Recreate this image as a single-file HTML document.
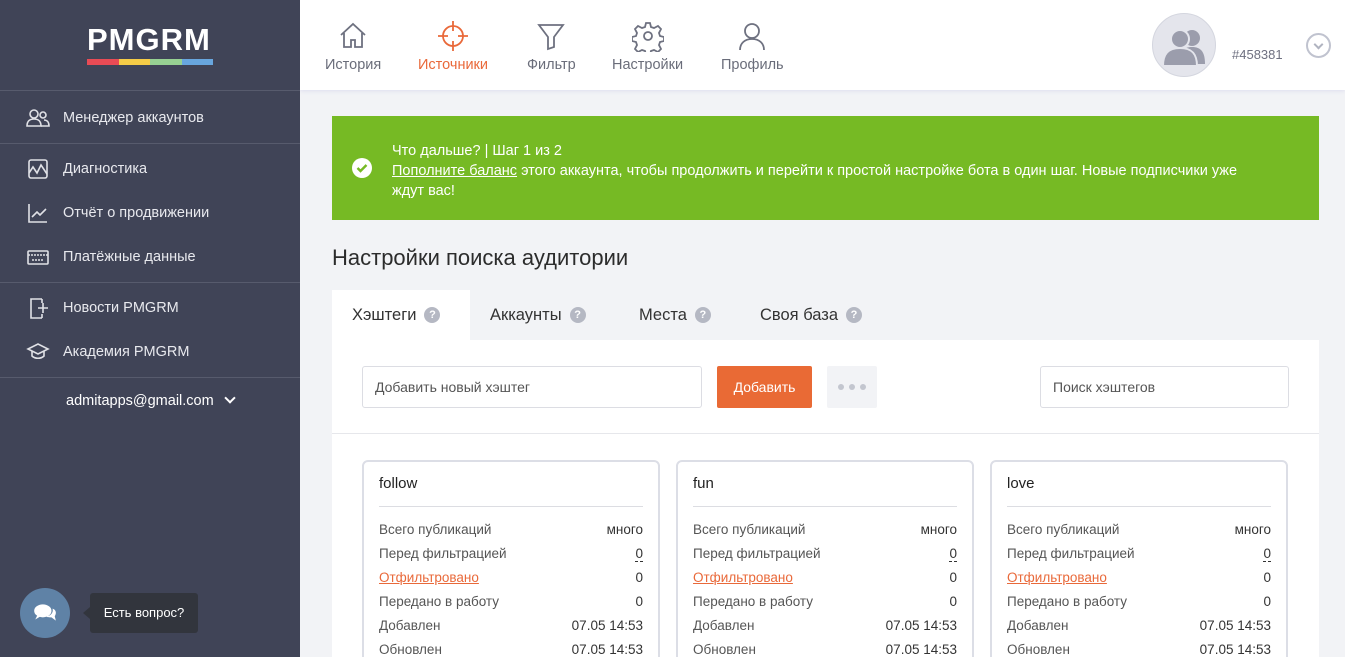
<!DOCTYPE html>
<html><head><meta charset="utf-8"><style>
*{box-sizing:border-box;margin:0;padding:0}
html,body{width:1345px;height:657px;overflow:hidden}
body{background:#f2f3f6;font-family:"Liberation Sans",sans-serif;position:relative}
.sb{position:absolute;left:0;top:0;width:300px;height:657px;background:#404457;color:#e8e9ee;z-index:2}
.logo{position:absolute;left:87px;top:22px;font-weight:bold;font-size:31px;color:#fff;letter-spacing:1px}
.bar{position:absolute;left:87px;top:59px;width:126px;height:6px;display:flex}
.bar i{flex:1}
.hr{position:absolute;left:0;width:300px;height:1px;background:#575b6d}
.it{position:absolute;left:26px;font-size:14.5px;display:flex;align-items:center;gap:13px}
.it svg{width:24px;height:24px;fill:none;stroke:#e0e1e6;stroke-width:1.6}
.hd{position:absolute;left:300px;top:0;right:0;height:90px;background:#fff;box-shadow:0 1px 4px #dde}
.nav{position:absolute;top:20px;text-align:center;font-size:14.5px;color:#6a6d7a}
.nav svg{display:block;margin:0 auto 5px;width:32px;height:32px;fill:none;stroke:#6e7180;stroke-width:1.8}
.tab{position:absolute;top:290px;height:50px;font-size:16.5px;color:#333;display:flex;align-items:center;gap:8px}
.q{width:16px;height:16px;border-radius:50%;background:#b5b8c3;color:#fff;font-size:11px;font-weight:bold;display:flex;align-items:center;justify-content:center}
.card{position:absolute;top:460px;width:298px;height:220px;border:2px solid #dcdee6;border-radius:6px;background:#fff;padding:0 15px}
.card h4{font-weight:normal;font-size:15px;color:#222;height:45px;line-height:44px;border-bottom:1px solid #dcdde2;margin-bottom:14px}
.r{display:flex;justify-content:space-between;font-size:13.5px;color:#555;height:24px;line-height:17px}
.r b{font-weight:normal;color:#333}
</style></head><body>
<div class="sb">
<div class="logo">PMGRM</div>
<div class="bar"><i style="background:#e94b55"></i><i style="background:#f5cc47"></i><i style="background:#97d192"></i><i style="background:#68a6de"></i></div>
<div class="hr" style="top:90px"></div>
<div class="it" style="top:106px"><svg viewBox="0 0 24 24"><circle cx="8" cy="8" r="4"/><path d="M1 20c0-5 3-7 7-7s7 2 7 7z"/><circle cx="17" cy="9" r="3"/><path d="M15 20h8c0-4-2-6-5-6"/></svg>Менеджер аккаунтов</div>
<div class="hr" style="top:143px"></div>
<div class="it" style="top:157px"><svg viewBox="0 0 24 24"><rect x="3" y="3" width="18" height="18" rx="2"/><path d="M3 16l4-6 4 6 4-8 6 9"/></svg>Диагностика</div>
<div class="it" style="top:201px"><svg viewBox="0 0 24 24"><path d="M3 3v18h18M6 16l5-5 3 3 6-6"/></svg>Отчёт о продвижении</div>
<div class="it" style="top:245px"><svg viewBox="0 0 24 24"><rect x="2" y="6" width="20" height="13" rx="1"/><path d="M2 10h20M6 15h12" stroke-dasharray="2 1"/></svg>Платёжные данные</div>
<div class="hr" style="top:282px"></div>
<div class="it" style="top:296px"><svg viewBox="0 0 24 24"><path d="M16 3H5v19h11M16 3v4M16 22v-4M12 12h10M17 7v10"/></svg>Новости PMGRM</div>
<div class="it" style="top:340px"><svg viewBox="0 0 24 24"><path d="M2 9l10-5 10 5-10 5z M6 11v5c3 3 9 3 12 0v-5"/></svg>Академия PMGRM</div>
<div class="hr" style="top:377px"></div>
<div style="position:absolute;left:66px;top:393px;font-size:14.5px;color:#fff">admitapps@gmail.com <span style="display:inline-block;width:8px;height:8px;border-right:2px solid #fff;border-bottom:2px solid #fff;transform:rotate(45deg);margin:0 0 3px 8px"></span></div>
<div style="position:absolute;left:20px;top:588px;width:50px;height:50px;border-radius:50%;background:#5f82a6"><svg viewBox="0 0 24 24" width="26" height="26" style="margin:12px" fill="#fff"><ellipse cx="10" cy="10" rx="8" ry="6"/><path d="M5 14l-2 4 5-3z"/><path d="M19 8c3 1 4 4 2 7l1 4-4-3c-2 0-4 0-5-1 4 0 7-3 6-7z"/></svg></div>
<div style="position:absolute;left:90px;top:593px;width:108px;height:40px;background:#32353d;border-radius:3px;color:#fff;font-size:13px;line-height:40px;text-align:center">Есть вопрос?</div>
<div style="position:absolute;left:83px;top:607px;border:6px solid transparent;border-right:7px solid #32353d;border-left:0"></div>
</div>
<div class="hd">
<div class="nav" style="left:25px"><svg viewBox="0 0 32 32"><path d="M4 15L16 4l12 11M7 13v14h7v-7h4v7h7V13"/></svg>История</div>
<div class="nav" style="left:118px;color:#e9693a"><svg viewBox="0 0 32 32" style="stroke:#e9693a"><circle cx="16" cy="16" r="10"/><path d="M16 1v10M16 21v10M1 16h10M21 16h10"/></svg>Источники</div>
<div class="nav" style="left:227px"><svg viewBox="0 0 32 32"><path d="M4 5h24l-9 12v10l-6 2V17z"/></svg>Фильтр</div>
<div class="nav" style="left:312px"><svg viewBox="0 0 32 32"><circle cx="16" cy="16" r="4"/><path d="M14 3h4l1 4 3 1 4-2 3 3-2 4 1 3 4 1v4l-4 1-1 3 2 4-3 3-4-2-3 1-1 4h-4l-1-4-3-1-4 2-3-3 2-4-1-3-4-1v-4l4-1 1-3-2-4 3-3 4 2 3-1z"/></svg>Настройки</div>
<div class="nav" style="left:421px"><svg viewBox="0 0 32 32"><circle cx="16" cy="11" r="7"/><path d="M4 30c0-7 5-11 12-11s12 4 12 11"/></svg>Профиль</div>
<div style="position:absolute;left:852px;top:13px;width:64px;height:64px;border-radius:50%;background:#e4e5ec;border:1px solid #d4d6df;overflow:hidden"><svg viewBox="0 0 64 64" width="64" height="64" fill="#9b9dac"><circle cx="39" cy="24" r="8"/><path d="M26 50c0-12 4-17 13-17s13 5 13 17z"/><circle cx="27" cy="25" r="9" stroke="#e4e5ec" stroke-width="2"/><path d="M10 52c0-12 5-18 17-18s17 6 17 18z" stroke="#e4e5ec" stroke-width="2"/></svg></div>
<div style="position:absolute;left:932px;top:47px;font-size:13px;color:#6e7080">#458381</div>
<div style="position:absolute;left:1006px;top:33px;width:25px;height:25px;border-radius:50%;border:2px solid #c0c3cf"><div style="width:7px;height:7px;border-right:2px solid #b0b3c0;border-bottom:2px solid #b0b3c0;transform:rotate(45deg);margin:6px auto 0"></div></div>
</div>
<div style="position:absolute;left:332px;top:116px;width:987px;height:104px;background:#76ba24;color:#fff;font-size:14.5px;line-height:20px;padding:25px 58px 0 60px">
<svg viewBox="0 0 20 20" width="20" height="20" style="position:absolute;left:20px;top:42px"><circle cx="10" cy="10" r="10" fill="#fff"/><path d="M5.5 10l3 3 6-6" stroke="#76ba24" stroke-width="2.4" fill="none"/></svg>
Что дальше? | Шаг 1 из 2<br><u>Пополните баланс</u> этого аккаунта, чтобы продолжить и перейти к простой настройке бота в один шаг. Новые подписчики уже ждут вас!</div>
<div style="position:absolute;left:332px;top:245px;font-size:22px;color:#2c2c2c">Настройки поиска аудитории</div>
<div style="position:absolute;left:332px;top:290px;width:138px;height:52px;background:#fff"></div>
<div class="tab" style="left:352px">Хэштеги <span class="q">?</span></div>
<div class="tab" style="left:490px">Аккаунты <span class="q">?</span></div>
<div class="tab" style="left:639px">Места <span class="q">?</span></div>
<div class="tab" style="left:760px">Своя база <span class="q">?</span></div>
<div style="position:absolute;left:332px;top:340px;width:987px;height:317px;background:#fff"></div>
<div style="position:absolute;left:332px;top:433px;width:987px;height:1px;background:#e6e7eb"></div>
<div style="position:absolute;left:362px;top:366px;width:340px;height:42px;border:1px solid #dcdde3;border-radius:3px;font-size:14px;color:#555;line-height:40px;padding-left:12px">Добавить новый хэштег</div>
<div style="position:absolute;left:717px;top:366px;width:95px;height:42px;background:#e96a35;border-radius:2px;color:#fff;font-size:14px;line-height:42px;text-align:center">Добавить</div>
<div style="position:absolute;left:827px;top:366px;width:50px;height:42px;background:#f2f3f6;border-radius:2px;display:flex;align-items:center;justify-content:center;gap:5px"><i style="width:6px;height:6px;border-radius:50%;background:#c3c6cf"></i><i style="width:6px;height:6px;border-radius:50%;background:#c3c6cf"></i><i style="width:6px;height:6px;border-radius:50%;background:#c3c6cf"></i></div>
<div style="position:absolute;left:1040px;top:366px;width:249px;height:42px;border:1px solid #dcdde3;border-radius:3px;font-size:14px;color:#555;line-height:40px;padding-left:12px">Поиск хэштегов</div>
<div class="card" style="left:362px"><h4>follow</h4><div class="r">Всего публикаций<b>много</b></div><div class="r">Перед фильтрацией<b style="border-bottom:1px dashed #333;height:17px">0</b></div><div class="r"><span style="color:#e9693a;text-decoration:underline">Отфильтровано</span><b>0</b></div><div class="r">Передано в работу<b>0</b></div><div class="r">Добавлен<b>07.05 14:53</b></div><div class="r">Обновлен<b>07.05 14:53</b></div></div>
<div class="card" style="left:676px"><h4>fun</h4><div class="r">Всего публикаций<b>много</b></div><div class="r">Перед фильтрацией<b style="border-bottom:1px dashed #333;height:17px">0</b></div><div class="r"><span style="color:#e9693a;text-decoration:underline">Отфильтровано</span><b>0</b></div><div class="r">Передано в работу<b>0</b></div><div class="r">Добавлен<b>07.05 14:53</b></div><div class="r">Обновлен<b>07.05 14:53</b></div></div>
<div class="card" style="left:990px"><h4>love</h4><div class="r">Всего публикаций<b>много</b></div><div class="r">Перед фильтрацией<b style="border-bottom:1px dashed #333;height:17px">0</b></div><div class="r"><span style="color:#e9693a;text-decoration:underline">Отфильтровано</span><b>0</b></div><div class="r">Передано в работу<b>0</b></div><div class="r">Добавлен<b>07.05 14:53</b></div><div class="r">Обновлен<b>07.05 14:53</b></div></div>
</body></html>
